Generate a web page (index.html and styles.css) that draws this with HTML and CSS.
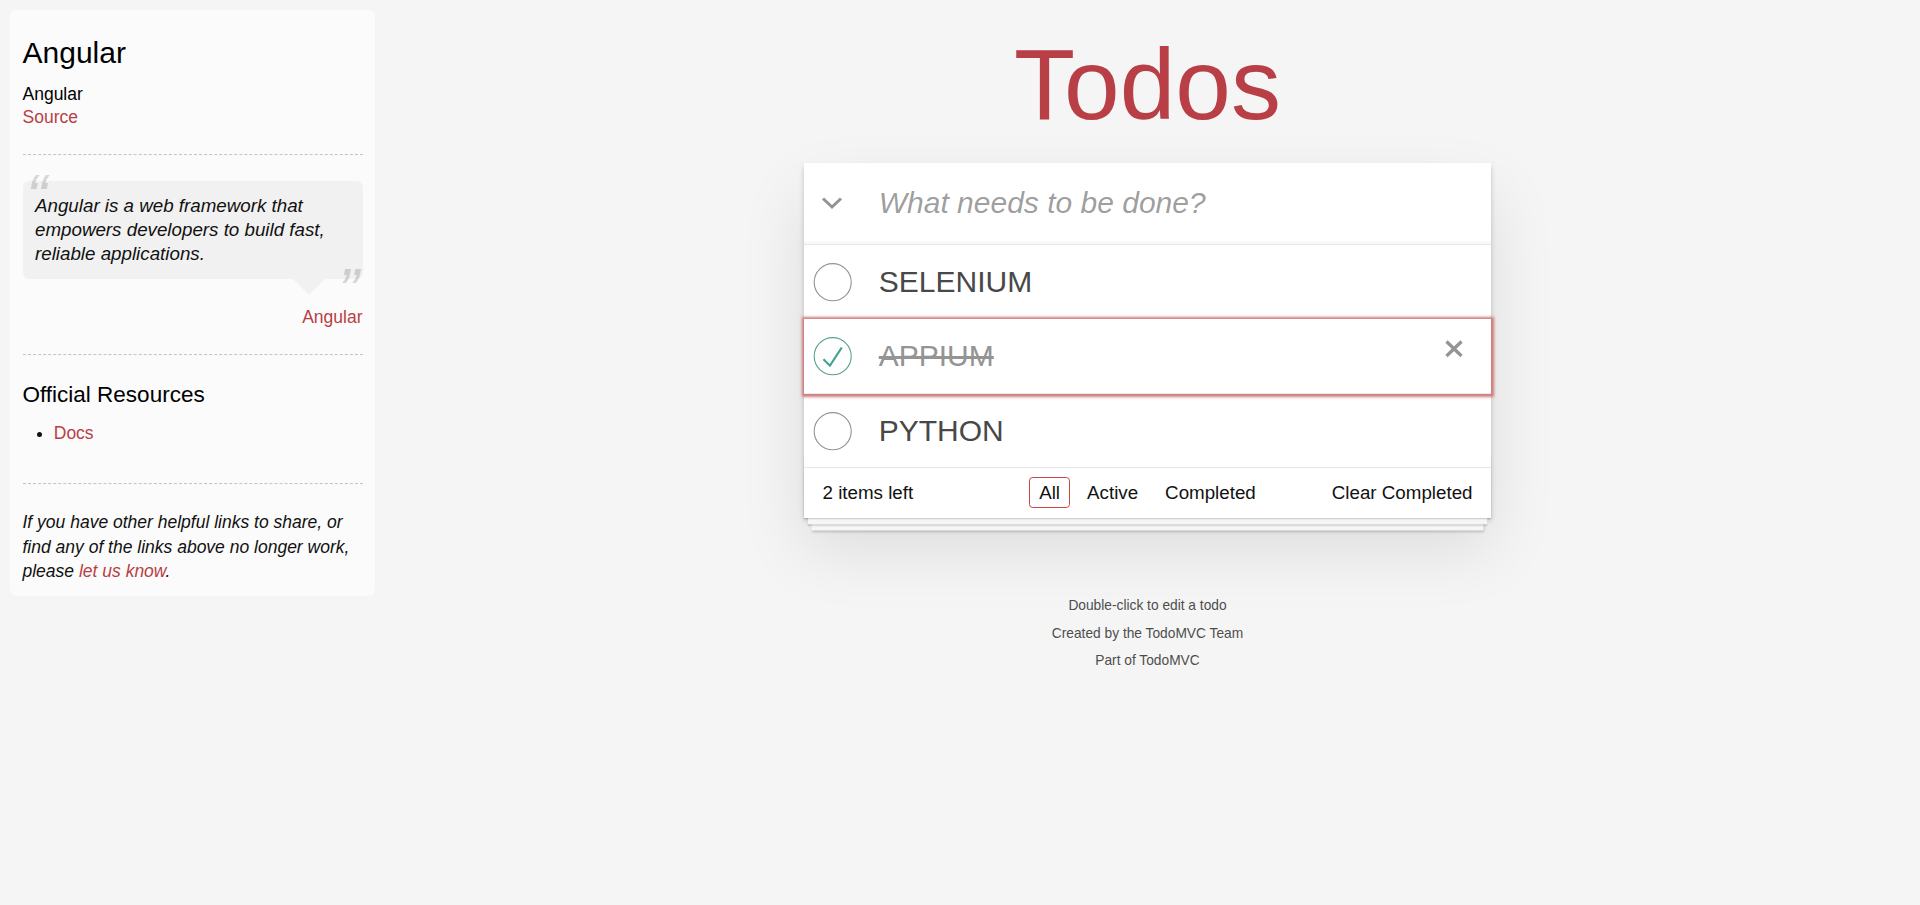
FILE: index.html
```html
<!DOCTYPE html>
<html lang="en">
<head>
<meta charset="utf-8">
<title>Angular • TodoMVC</title>
<link rel="stylesheet" href="styles.css">
</head>
<body>
<div class="page">
  <aside class="learn">
    <header>
      <h3 class="learn-title">Angular</h3>
      <div class="source-links">
        <h5 class="source-name">Angular</h5>
        <a href="#">Source</a>
      </div>
    </header>
    <hr class="divider">
    <blockquote class="quote">
      <div class="speech-bubble">
        <p>Angular is a web framework that empowers developers to build fast, reliable applications.</p>
      </div>
      <footer class="quote-footer"><a href="#">Angular</a></footer>
    </blockquote>
    <hr class="divider">
    <h4 class="resources-title">Official Resources</h4>
    <ul class="resources">
      <li><a href="#">Docs</a></li>
    </ul>
    <footer class="learn-footer">
      <hr class="divider">
      <em>If you have other helpful links to share, or find any of the links above no longer work, please <a href="#">let us know</a>.</em>
    </footer>
  </aside>

  <main class="app-column">
    <h1 class="app-title">Todos</h1>
    <section class="todoapp">
      <header class="header">
        <label class="toggle-all" aria-label="Mark all as complete">
          <svg width="22" height="14" viewBox="0 0 22 14"><polyline points="2,2.5 11,11 20,2.5" fill="none" stroke="#949494" stroke-width="3"/></svg>
        </label>
        <input class="new-todo" placeholder="What needs to be done?">
      </header>
      <section class="main">
        <ul class="todo-list">
          <li class="todo">
            <svg class="toggle" width="50" height="50" viewBox="-10 -18 100 135"><circle cx="50" cy="50" r="50" fill="none" stroke="#949494" stroke-width="3"/></svg>
            <label class="todo-label">SELENIUM</label>
          </li>
          <li class="todo completed focused">
            <svg class="toggle" width="50" height="50" viewBox="-10 -18 100 135"><circle cx="50" cy="50" r="50" fill="none" stroke="#59A193" stroke-width="3"/><path fill="#3EA390" d="M72 25L42 71 27 56l-4 4 20 20 34-52z"/></svg>
            <label class="todo-label">APPIUM</label>
            <button class="destroy" aria-label="Delete">
              <svg width="50" height="50" viewBox="0 0 50 50"><path d="M17.5 10.5 L32.5 25 M32.5 10.5 L17.5 25" stroke="#949494" stroke-width="3.3" fill="none"/></svg>
            </button>
          </li>
          <li class="todo">
            <svg class="toggle" width="50" height="50" viewBox="-10 -18 100 135"><circle cx="50" cy="50" r="50" fill="none" stroke="#949494" stroke-width="3"/></svg>
            <label class="todo-label">PYTHON</label>
          </li>
        </ul>
      </section>
      <footer class="footer">
        <span class="todo-count"><strong>2</strong> items left</span>
        <ul class="filters"><li><a class="selected" href="#">All</a></li><li><a href="#">Active</a></li><li><a href="#">Completed</a></li></ul>
        <button class="clear-completed">Clear Completed</button>
      </footer>
    </section>
    <footer class="info">
      <p>Double-click to edit a todo</p>
      <p>Created by the <a href="#">TodoMVC Team</a></p>
      <p>Part of <a href="#">TodoMVC</a></p>
    </footer>
  </main>
</div>
</body>
</html>
```

FILE: styles.css
```css
html,
body {
  margin: 0;
  padding: 0;
}

body {
  background: #f5f5f5;
  color: #111111;
  font-family: "Liberation Sans", Arial, sans-serif;
  font-size: 17.5px;
  line-height: 24.5px;
}

.page {
  display: flex;
  align-items: flex-start;
  min-height: 905px;
}

/* ---------- Sidebar ---------- */
.learn {
  flex: none;
  width: 365px;
  box-sizing: border-box;
  margin: 10px 0 0 10px;
  padding: 12.5px;
  border-radius: 6.25px;
  background: rgba(255, 255, 255, 0.6);
}

.learn a {
  color: #b83f45;
  text-decoration: none;
}

.learn-title {
  margin: 12.5px 0;
  font-size: 30px;
  line-height: 36px;
  font-weight: normal;
  color: #000;
}

.source-name {
  margin: 12.5px 0 0;
  font-size: 17.5px;
  line-height: 21px;
  font-weight: normal;
  color: #000;
}

.divider {
  height: 0;
  margin: 25px 0;
  border: 0;
  border-top: 1px dashed #c5c5c5;
  border-bottom: 1px dashed #f7f7f7;
}

.quote {
  margin: 25px 0 0;
  padding: 0;
}

.speech-bubble {
  position: relative;
  padding: 12.5px;
  border-radius: 6.25px;
  background: rgba(0, 0, 0, 0.04);
}

.speech-bubble::after {
  content: "";
  position: absolute;
  top: 100%;
  right: 37.5px;
  border: 16.25px solid transparent;
  border-top-color: rgba(0, 0, 0, 0.04);
}

.speech-bubble p {
  margin: 0;
  font-size: 18.75px;
  line-height: 1.3;
  font-style: italic;
}

.speech-bubble p::before,
.speech-bubble p::after {
  position: absolute;
  font-size: 62.5px;
  line-height: 1.3;
  opacity: 0.15;
}

.speech-bubble p::before {
  content: "\201C";
  top: -25px;
  left: 3.75px;
}

.speech-bubble p::after {
  content: "\201D";
  bottom: -52.5px;
  right: 3.75px;
}

.quote-footer {
  margin-top: 25.5px;
  text-align: right;
}

.resources-title {
  margin: 12.5px 0;
  font-size: 22.5px;
  line-height: 27px;
  font-weight: normal;
  color: #000;
}

.resources {
  margin: 0 0 37.5px 31.25px;
  padding: 0;
}

.resources li {
  line-height: 25px;
}

.learn-footer em {
  display: block;
}

/* ---------- App column ---------- */
.app-column {
  flex: 1;
  min-width: 0;
  padding-top: 33.5px;
}

.app-title {
  margin: 0 auto 29px;
  width: 687.5px;
  text-align: center;
  font-size: 100px;
  line-height: 100px;
  font-weight: normal;
  color: #b83f45;
}

.todoapp {
  width: 687.5px;
  margin: 0 auto;
  background: #fff;
  position: relative;
  box-shadow: 0 2.5px 5px 0 rgba(0, 0, 0, 0.2),
              0 31.25px 62.5px 0 rgba(0, 0, 0, 0.1);
}

.header {
  display: flex;
  height: 81.25px;
  box-shadow: inset 0 -2.5px 1.25px rgba(0, 0, 0, 0.03);
}

.toggle-all {
  flex: none;
  width: 56.25px;
  display: flex;
  align-items: center;
  justify-content: center;
}

.toggle-all svg {
  display: block;
}

.new-todo {
  flex: 1;
  min-width: 0;
  margin: 0;
  height: 81.25px;
  box-sizing: border-box;
  padding: 20px 20px 20px 18.75px;
  border: none;
  outline: none;
  background: transparent;
  font-family: inherit;
  font-size: 30px;
  line-height: 1.4em;
  color: #111;
}

.new-todo::placeholder {
  font-style: italic;
  font-weight: 400;
  color: rgba(0, 0, 0, 0.4);
}

.main {
  position: relative;
  z-index: 2;
  border-top: 1px solid #e6e6e6;
}

.todo-list {
  margin: 0;
  padding: 0;
  list-style: none;
}

.todo {
  display: flex;
  align-items: center;
  font-size: 30px;
  border-bottom: 1px solid #ededed;
}

.todo:last-child {
  border-bottom: none;
}

.todo.focused {
  box-shadow: 0 0 2.5px 2.5px #cf7d7d;
}

.toggle {
  flex: none;
  display: block;
}

.todo-label {
  flex: 1;
  min-width: 0;
  padding: 18.75px 18.75px 18.75px 25px;
  line-height: 36px;
  color: #484848;
  word-break: break-all;
}

.completed .todo-label {
  color: #949494;
  text-decoration: line-through;
}

.destroy {
  flex: none;
  width: 50px;
  height: 50px;
  margin-right: 12.5px;
  padding: 0;
  border: 0;
  background: none;
}

.destroy svg {
  display: block;
}

.footer {
  position: relative;
  display: grid;
  grid-template-columns: 1fr auto 1fr;
  align-items: center;
  height: 25px;
  padding: 12.5px 18.75px;
  font-size: 18.75px;
  border-top: 1px solid #e6e6e6;
}

.footer::before {
  content: "";
  position: absolute;
  right: 0;
  bottom: 0;
  left: 0;
  height: 62.5px;
  overflow: hidden;
  box-shadow: 0 1.25px 1.25px rgba(0, 0, 0, 0.2),
              0 10px 0 -3.75px #f6f6f6,
              0 11.25px 1.25px -3.75px rgba(0, 0, 0, 0.2),
              0 20px 0 -7.5px #f6f6f6,
              0 21.25px 2.5px -7.5px rgba(0, 0, 0, 0.2);
}

.todo-count {
  justify-self: start;
}

.todo-count strong {
  font-weight: normal;
}

.filters {
  margin: 0;
  padding: 0;
  list-style: none;
}

.filters li {
  display: inline;
}

.filters a {
  color: inherit;
  margin: 3.75px;
  padding: 3.75px 8.75px;
  text-decoration: none;
  border: 1px solid transparent;
  border-radius: 3.75px;
}

.filters a.selected {
  border-color: #ce4646;
}

.clear-completed {
  justify-self: end;
  margin: 0;
  padding: 0;
  border: 0;
  background: none;
  font-family: inherit;
  font-size: 18.75px;
  line-height: 23.75px;
  color: inherit;
}

.info {
  width: 687.5px;
  margin: 81px auto 0;
  color: #4d4d4d;
  font-size: 13.75px;
  text-shadow: 0 1px 0 rgba(255, 255, 255, 0.5);
  text-align: center;
}

.info p {
  margin: 13.75px 0;
  line-height: 1;
}

.info a {
  color: inherit;
  text-decoration: none;
}
```
